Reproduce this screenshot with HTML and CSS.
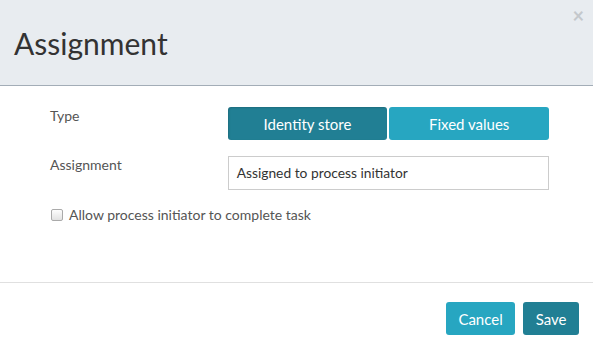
FILE: index.html
```html
<!DOCTYPE html>
<html>
<head>
<meta charset="utf-8">
<link rel="stylesheet" href="styles.css">
</head>
<body>
<div class="modal">
  <div class="modal-header">
    <h1 class="title">Assignment</h1>
    <span class="close">&times;</span>
  </div>
  <div class="modal-body">
    <div class="row">
      <div class="label">Type</div>
      <div class="control btn-group">
        <button class="seg seg-active">Identity store</button>
        <button class="seg">Fixed values</button>
      </div>
    </div>
    <div class="row">
      <div class="label">Assignment</div>
      <div class="control">
        <div class="input">Assigned to process initiator</div>
      </div>
    </div>
    <label class="check">
      <span class="box"></span>
      <span>Allow process initiator to complete task</span>
    </label>
  </div>
  <div class="modal-footer">
    <button class="btn btn-cancel">Cancel</button>
    <button class="btn btn-save">Save</button>
  </div>
</div>
</body>
</html>
```
FILE: styles.css
```css
* { box-sizing: border-box; }
html, body { margin: 0; padding: 0; }
body {
  width: 593px;
  height: 350px;
  background: #fff;
  font-family: Lato, "Open Sans", sans-serif;
  color: #333;
  overflow: hidden;
}
.modal { display: flex; flex-direction: column; height: 350px; }
.modal-header {
  height: 86px;
  background: #e8ecf0;
  border-bottom: 1px solid #a3adb7;
  position: relative;
  padding: 0 14px;
}
.title {
  margin: 0;
  padding-top: 23px;
  font-size: 30px;
  font-weight: 400;
  line-height: 40px;
  color: #333;
}
.close {
  position: absolute;
  right: 9px;
  top: 3px;
  font-size: 20px;
  font-weight: 700;
  color: #c4c8cc;
  line-height: 24px;
}
.modal-body {
  padding: 21px 44px 0 50px;
  height: 197px;
  border-bottom: 1px solid #e0e0e0;
}
.row { display: flex; align-items: flex-start; margin-bottom: 16px; }
.label { width: 178px; font-size: 14px; color: #555; line-height: 18px; }
.control { width: 322px; }
.btn-group { display: flex; gap: 2px; }
.seg {
  flex: 1;
  height: 33px;
  border: none;
  border-radius: 3px;
  background: #27a6c1;
  color: #fff;
  font-family: Lato, sans-serif;
  font-size: 15px;
}
.seg-active { background: #217f94; box-shadow: inset 1px 1px 2px rgba(0,0,0,0.15); }
.input {
  height: 34px;
  border: 1px solid #ccc;
  padding: 0 8px;
  font-size: 13.8px;
  line-height: 32px;
  color: #333;
}
.check {
  display: flex;
  align-items: center;
  gap: 6px;
  margin-top: 2px;
  font-size: 14px;
  color: #555;
}
.box {
  width: 12px;
  height: 12px;
  border: 1px solid #aaa;
  border-radius: 2px;
  background: linear-gradient(#fdfdfd, #e2e2e2);
  margin-left: 1px;
}
.modal-footer {
  display: flex;
  justify-content: flex-end;
  gap: 8px;
  padding: 19px 14px 0 0;
}
.btn {
  height: 33px;
  border: none;
  border-radius: 3px;
  color: #fff;
  font-family: Lato, sans-serif;
  font-size: 15px;
  padding: 0 12.5px;
}
.btn-cancel { background: #27a6c1; }
.btn-save { background: #217f94; }
```
